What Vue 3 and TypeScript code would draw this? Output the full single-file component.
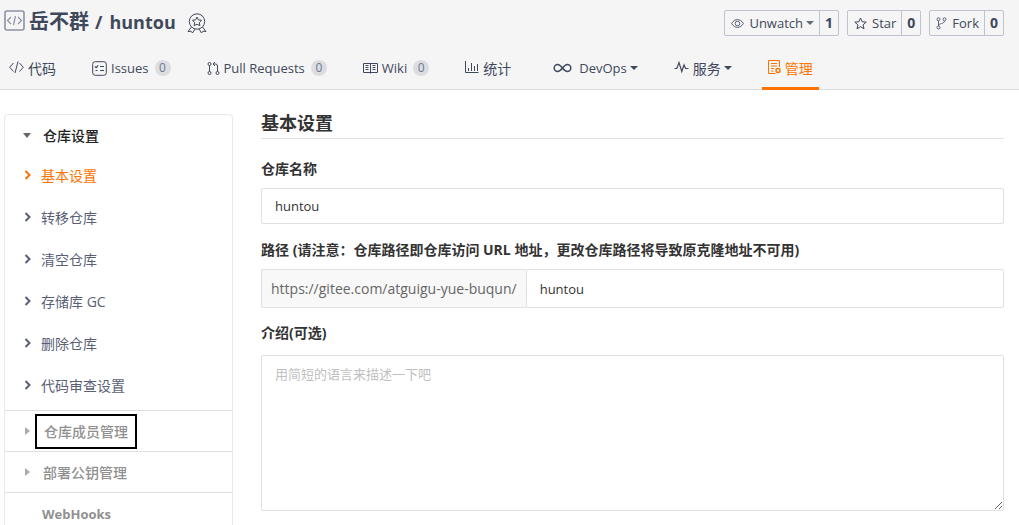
<script setup lang="ts">
import { ref } from 'vue'

interface Tab {
  key: string
  label: string
  cjk?: boolean
  count?: number
  caret?: boolean
}

const tabs: Tab[] = [
  { key: 'code', label: '代码', cjk: true },
  { key: 'issues', label: 'Issues', count: 0 },
  { key: 'pulls', label: 'Pull Requests', count: 0 },
  { key: 'wiki', label: 'Wiki', count: 0 },
  { key: 'stats', label: '统计', cjk: true },
  { key: 'devops', label: 'DevOps', caret: true },
  { key: 'service', label: '服务', cjk: true, caret: true },
  { key: 'manage', label: '管理', cjk: true },
]
const activeTab = 'manage'

const actions = [
  { key: 'watch', label: 'Unwatch', count: 1, caret: true },
  { key: 'star', label: 'Star', count: 0, caret: false },
  { key: 'fork', label: 'Fork', count: 0, caret: false },
]

const settings = ['基本设置', '转移仓库', '清空仓库', '存储库 GC', '删除仓库', '代码审查设置']
const activeSetting = ref('基本设置')

const repoName = ref('huntou')
const repoPath = ref('huntou')
const intro = ref('')
</script>

<template>
  <div class="page">
    <header class="header">
      <div class="title-row">
        <h1 class="title">
          <svg class="repo-icon" viewBox="0 0 21 21" fill="none" stroke="#8c92a4">
            <rect x="1" y="1" width="19" height="19" rx="2" stroke-width="1.6" />
            <path d="M7 7 3.500 10.500 7 14M14 7l3.500 3.500L14 14M11.500 6l-2 9" stroke-width="1.200" />
          </svg>
          <a href="#owner">岳不群</a><span class="slash">/</span><a href="#repo">huntou</a>
          <svg class="medal" viewBox="0 0 20 20" fill="none" stroke="#40485b">
            <circle cx="10" cy="8.500" r="7.700" />
            <path d="m10 4 1.400 2.900 3.200.4-2.300 2.200.6 3.200L10 11.200l-2.900 1.500.6-3.200-2.300-2.200 3.200-.4z" />
            <path d="M4.500 14 1 18.500l3-.3L5.500 20l2.500-4M15.500 14l3.500 4.500-3-.3L14.500 20 12 16" />
          </svg>
        </h1>
        <div class="actions">
          <div v-for="a in actions" :key="a.key" class="action">
            <button type="button" class="action-main">
              <svg v-if="a.key === 'watch'" class="aicon" viewBox="0 0 13 13" fill="none" stroke="#596076">
                <path d="M.6 6.500C3.600 1.300 9.400 1.300 12.400 6.500 9.400 11.700 3.600 11.700.6 6.500z" />
                <circle cx="6.500" cy="6.500" r="2.300" />
              </svg>
              <svg v-else-if="a.key === 'star'" class="aicon" viewBox="0 0 13 13" fill="none" stroke="#40485b">
                <path d="m6.500 1 1.600 3.700 4.100.4-3.100 2.700.9 4-3.500-2.100L3 11.800l.9-4L.8 5.100l4.100-.4z" />
              </svg>
              <svg v-else class="aicon fork" viewBox="0 0 11 13" fill="none" stroke="#596076">
                <circle cx="2.500" cy="2.300" r="1.500" />
                <circle cx="8.500" cy="2.300" r="1.500" />
                <circle cx="2.500" cy="10.500" r="1.500" />
                <path d="M2.500 4v5M8.500 4c0 3-6 2-6 5" />
              </svg>
              <span>{{ a.label }}</span>
              <i v-if="a.caret" class="caret small"></i>
            </button>
            <a class="action-count" :href="'#' + a.key">{{ a.count }}</a>
          </div>
        </div>
      </div>

      <nav class="tabs">
        <a
          v-for="t in tabs"
          :key="t.key"
          :href="'#' + t.key"
          class="tab"
          :class="[t.key, { active: t.key === activeTab, cjk: t.cjk }]"
        >
          <svg v-if="t.key === 'code'" class="ticon" viewBox="0 0 15 15" fill="none" stroke="currentColor">
            <path d="M4.500 3 .7 7.300l3.800 4.200M10.500 3l3.800 4.300-3.800 4.200M9 1.500 6 13" />
          </svg>
          <svg v-else-if="t.key === 'issues'" class="ticon" viewBox="0 0 15 15" fill="none" stroke="currentColor">
            <rect x=".7" y=".7" width="13.600" height="13.600" rx="2.500" />
            <path d="m3 5.500 1.200 1.200 2-2.400M8 5.500h4M8 9.500h4M3.500 9.500h2" stroke-width="1.200" />
          </svg>
          <svg v-else-if="t.key === 'pulls'" class="ticon narrow" viewBox="0 0 12 15" fill="none" stroke="currentColor">
            <circle cx="2" cy="3" r="1.500" />
            <circle cx="2" cy="12" r="1.500" />
            <circle cx="10" cy="12" r="1.500" />
            <path d="M2 4.500v6M10 10.500V5q0-2-2-2H5.500M7.500 1l-2 2 2 2" />
          </svg>
          <svg v-else-if="t.key === 'wiki'" class="ticon" viewBox="0 0 15 15" fill="none" stroke="currentColor">
            <path d="M.5 2.500h14v9H.5zM7.500 2.500v10M2.500 4.500h3M2.500 6.500h3M2.500 8.500h3M9.500 4.500h3M9.500 6.500h3M9.500 8.500h3" />
          </svg>
          <svg v-else-if="t.key === 'stats'" class="ticon chart" viewBox="0 0 14 15" fill="none" stroke="currentColor">
            <path d="M.5 1v11.500h13M3.500 11V8M6.500 11V3M9.500 11V6M12.500 11V4" />
          </svg>
          <svg v-else-if="t.key === 'devops'" class="ticon wide" viewBox="0 0 19 15" fill="none" stroke="currentColor">
            <path d="M9.500 7C7.500 4.500 6.500 3.500 4.700 3.500a3.500 3.500 0 0 0 0 7c1.800 0 2.800-1 4.800-3.500S12.500 3.500 14.300 3.500a3.500 3.500 0 0 1 0 7c-1.800 0-2.800-1-4.800-3.500z" stroke-width="1.500" />
          </svg>
          <svg v-else-if="t.key === 'service'" class="ticon" viewBox="0 0 15 15" fill="none" stroke="currentColor">
            <path d="M.5 8.500h2.300L5 2.500l2.800 9L10 5l1.600 3.500h2.900" stroke-width="1.200" />
          </svg>
          <svg v-else class="ticon narrow" viewBox="0 0 13 15" fill="none" stroke="currentColor">
            <path d="M11.500 7V.5H.5v13h7M3 3.500h6M3 6h6M3 8.500h3M3 11h2.500" />
            <circle cx="10" cy="10.500" r="2" stroke-width="1.400" />
          </svg>
          <span class="tab-label">{{ t.label }}</span>
          <span v-if="t.count !== undefined" class="badge">{{ t.count }}</span>
          <i v-if="t.caret" class="caret"></i>
        </a>
      </nav>
    </header>

    <div class="body">
      <aside class="side">
        <section class="group open">
          <button type="button" class="group-head">
            <i class="arrow down"></i><span>仓库设置</span>
          </button>
          <ul class="items">
            <li v-for="s in settings" :key="s">
              <a
                href="#settings"
                class="item"
                :class="{ active: s === activeSetting }"
                @click.prevent="activeSetting = s"
              >
                <svg class="chev" viewBox="0 0 8 10" fill="none" stroke="currentColor" stroke-width="2">
                  <path d="m1.500 1 4 4-4 4" />
                </svg>
                <span>{{ s }}</span>
              </a>
            </li>
          </ul>
        </section>
        <section class="group">
          <button type="button" class="group-head">
            <i class="arrow right"></i><span class="marked">仓库成员管理</span>
          </button>
        </section>
        <section class="group">
          <button type="button" class="group-head">
            <i class="arrow right"></i><span>部署公钥管理</span>
          </button>
        </section>
        <section class="group">
          <a class="group-head hooks" href="#webhooks">WebHooks</a>
        </section>
      </aside>

      <main class="main">
        <h2 class="heading">基本设置</h2>
        <form @submit.prevent>
          <label class="label" for="repo-name">仓库名称</label>
          <input id="repo-name" v-model="repoName" class="input" type="text" />

          <label class="label" for="repo-path">路径 (请注意：仓库路径即仓库访问 URL 地址，更改仓库路径将导致原克隆地址不可用)</label>
          <div class="path">
            <span class="prefix">https://gitee.com/atguigu-yue-buqun/</span>
            <input id="repo-path" v-model="repoPath" class="input path-input" type="text" />
          </div>

          <label class="label intro-label" for="repo-intro">介绍(可选)</label>
          <textarea id="repo-intro" v-model="intro" class="input area" placeholder="用简短的语言来描述一下吧"></textarea>
        </form>
      </main>
    </div>
  </div>
</template>

<style>
html {
  scrollbar-width: none;
}
body {
  margin: 0;
  background: #fff;
}
</style>

<style scoped>
.page,
.page button,
.page input,
.page textarea {
  font-family: 'Open Sans', 'Noto Sans CJK SC', sans-serif;
  font-size: 13px;
}
.page {
  color: #40485b;
}
.page * {
  box-sizing: border-box;
}
a {
  color: inherit;
  text-decoration: none;
}
button {
  border: 0;
  background: none;
  color: inherit;
  padding: 0;
  cursor: pointer;
}
svg {
  flex: none;
}

.header {
  background: #f5f5f5;
  border-bottom: 1px solid #dcddde;
}
.title-row {
  display: flex;
  justify-content: space-between;
  align-items: center;
  height: 46px;
  padding: 0 15px 0 4px;
}
.title {
  display: flex;
  align-items: center;
  margin: 0;
  padding-bottom: 2px;
  font-size: 18px;
  line-height: 28px;
  font-weight: 700;
}
.title a:first-of-type {
  font-size: 20px;
  margin-left: 4px;
}
.slash {
  margin: 0 7px 0 6px;
}
.repo-icon {
  width: 21px;
  height: 21px;
  margin-bottom: 3px;
}
.medal {
  width: 20px;
  height: 20px;
  margin: 2px 0 0 11px;
}
.actions {
  display: flex;
  gap: 8px;
}
.action {
  display: flex;
  height: 26px;
  border: 1px solid #bfc2d0;
  border-radius: 2px;
}
.action-main {
  display: flex;
  align-items: center;
  gap: 5px;
  padding: 0 5px 0 6px;
}
.action-count {
  width: 19px;
  border-left: 1px solid #bfc2d0;
  text-align: center;
  font-size: 14px;
  line-height: 24px;
  font-weight: 700;
}
.aicon {
  width: 13px;
  height: 13px;
}
.aicon.fork {
  width: 11px;
}
.caret {
  width: 0;
  border: 4px solid transparent;
  border-top-color: currentColor;
  border-bottom-width: 0;
  margin-left: -1px;
}
.caret.small {
  margin-left: -2px;
  opacity: 0.8;
}

.tabs {
  display: flex;
  gap: 24px;
  padding-left: 3px;
}
.tab {
  display: flex;
  align-items: center;
  gap: 4px;
  height: 44px;
  padding: 3px 6px 0;
  margin-bottom: -1px;
  border-bottom: 3px solid transparent;
  white-space: nowrap;
}
.tab.cjk {
  padding-top: 2px;
  font-size: 14px;
}
.tab.devops {
  margin-left: 6px;
}
.tab.devops .tab-label {
  margin-left: 3px;
}
.tab.active {
  color: #fe7300;
  border-bottom-color: #fe7300;
}
.ticon {
  width: 15px;
  height: 15px;
}
.ticon.narrow {
  width: 13px;
}
.ticon.chart {
  width: 14px;
}
.ticon.wide {
  width: 19px;
}
.badge {
  min-width: 16px;
  height: 16px;
  margin-left: 2px;
  border-radius: 8px;
  background: #dcdde0;
  color: #6c7893;
  font-size: 12px;
  line-height: 16px;
  text-align: center;
}

.body {
  display: flex;
  align-items: flex-start;
  gap: 28px;
  padding: 0 15px 0 4px;
}
.side {
  flex: none;
  width: 229px;
  margin-top: 24px;
  border: 1px solid #e3e9ed;
  border-radius: 4px;
  font-size: 14px;
}
.group + .group {
  border-top: 1px solid #dddfe0;
}
.group-head {
  display: flex;
  align-items: center;
  width: 100%;
  height: 40px;
  padding-left: 18px;
  font-weight: 500;
  color: #909090;
}
.side button.group-head {
  font-size: 14px;
}
.open .group-head {
  color: #222;
}
.group-head.hooks {
  height: 42px;
  padding-left: 37px;
  font-size: 13px;
  font-weight: 700;
}
.arrow {
  flex: none;
  width: 20px;
}
.arrow::before {
  content: '';
  display: block;
  width: 0;
  border: 4px solid transparent;
}
.arrow.down::before {
  border-top: 5px solid #666;
  border-bottom: 0;
}
.arrow.right::before {
  margin-left: 2px;
  border-left: 5px solid #aaa;
  border-right: 0;
}
.marked {
  margin-left: -8px;
  padding: 0 7px;
  border: 2px solid #000;
  line-height: 31px;
}
.items {
  list-style: none;
  margin: -1px 0 0;
  padding: 0 0 4px;
}
.item {
  display: flex;
  align-items: center;
  gap: 9px;
  height: 42px;
  padding-left: 19px;
  color: #596076;
}
.item.active {
  color: #fe7300;
}
.chev {
  width: 8px;
  height: 10px;
}

.main {
  flex: 1;
  min-width: 0;
  padding-top: 20px;
}
.heading {
  margin: 0;
  padding-bottom: 1px;
  border-bottom: 1px solid #e0e2e5;
  color: #333;
  font-size: 18px;
  line-height: 27px;
  font-weight: 700;
}
.label {
  display: block;
  margin: 16px 0 9px;
  color: #333;
  font-size: 14px;
  line-height: 20px;
  font-weight: 700;
}
form .label:first-child {
  margin-top: 20px;
}
.label.intro-label {
  margin: 15px 0 12px;
}
.input {
  display: block;
  width: 100%;
  height: 36px;
  margin: 0;
  padding: 0 13px;
  border: 1px solid #dce1e6;
  border-radius: 2px;
  background: #fff;
  color: #333;
  outline: none;
}
.path {
  display: flex;
  height: 39px;
}
.prefix {
  flex: none;
  padding: 0 9px;
  border: 1px solid #dce1e6;
  border-right: 0;
  border-radius: 2px 0 0 2px;
  background: #f8f8f8;
  color: #666;
  font-size: 14px;
  line-height: 37px;
}
.path-input {
  flex: 1;
  min-width: 0;
  height: 100%;
}
.page textarea.area {
  height: 156px;
  padding: 8px 13px;
  font-size: 13px;
  line-height: 20px;
  resize: vertical;
}
.area::placeholder {
  color: #bfbfbf;
}
</style>
